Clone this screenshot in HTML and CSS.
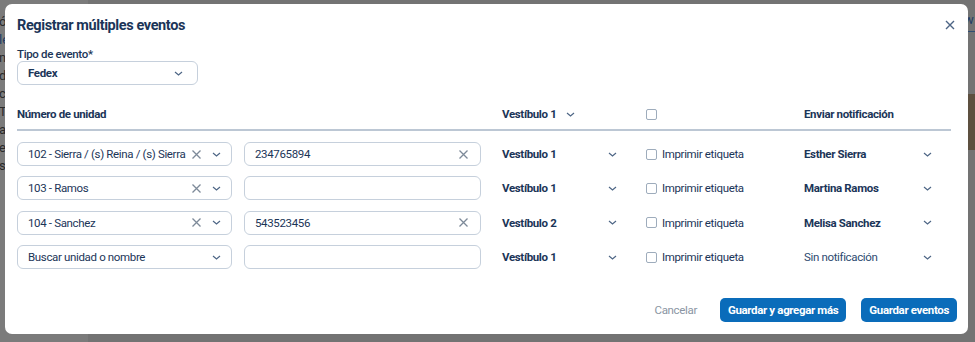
FILE: index.html
```html
<!DOCTYPE html>
<html lang="es">
<head>
<meta charset="utf-8">
<title>Registrar múltiples eventos</title>
<link rel="stylesheet" href="styles.css">
</head>
<body>
<div class="page">
  <div class="side">
    <span class="frag">ó</span>
    <span class="frag blue">le</span>
    <span class="frag">n</span>
    <span class="frag">d</span>
    <span class="frag">c</span>
    <span class="frag">T</span>
    <span class="frag">a</span>
    <span class="frag">e</span>
    <span class="frag">s/</span>
  </div>
  <div class="main">
    <div class="edge">
      <span class="edge-tab">w</span>
      <span class="edge-block"></span>
    </div>
  </div>
</div>

<div class="modal" role="dialog" aria-labelledby="mtitle">
  <div class="modal-head">
    <h1 id="mtitle" class="title">Registrar múltiples eventos</h1>
    <button class="close" aria-label="Cerrar">
      <svg width="10" height="10" viewBox="0 0 10 10"><path d="M1 1L9 9M9 1L1 9" stroke="#4d6585" stroke-width="1.4" fill="none"/></svg>
    </button>
  </div>

  <div class="field">
    <label class="label">Tipo de evento*</label>
    <div class="select select-type">
      <span class="val strong">Fedex</span>
      <svg class="chev" width="9" height="5" viewBox="0 0 9 5"><path d="M1 1L4.5 4L8 1" stroke="#4d6585" stroke-width="1.2" fill="none"/></svg>
    </div>
  </div>

  <div class="grid head">
    <div class="h-unit">Número de unidad</div>
    <div class="h-vest">Vestíbulo 1
      <svg class="chev" width="9" height="5" viewBox="0 0 9 5"><path d="M1 1L4.5 4L8 1" stroke="#4d6585" stroke-width="1.2" fill="none"/></svg>
    </div>
    <div class="h-check"><span class="cb"></span></div>
    <div class="h-notif">Enviar notificación</div>
  </div>
  <div class="rule"></div>

  <div class="rows">
    <div class="grid row">
      <div class="select unit"><span class="val">102 - Sierra / (s) Reina / (s) Sierra</span><span class="x"><svg width="9" height="9" viewBox="0 0 9 9"><path d="M0.5 0.5L8.5 8.5M8.5 0.5L0.5 8.5" stroke="#7d8a99" stroke-width="1.3" fill="none"/></svg></span><svg class="chev" width="9" height="5" viewBox="0 0 9 5"><path d="M1 1L4.5 4L8 1" stroke="#4d6585" stroke-width="1.2" fill="none"/></svg></div>
      <div class="input"><span class="val">234765894</span><span class="x"><svg width="9" height="9" viewBox="0 0 9 9"><path d="M0.5 0.5L8.5 8.5M8.5 0.5L0.5 8.5" stroke="#7d8a99" stroke-width="1.3" fill="none"/></svg></span></div>
      <div class="dd strong">Vestíbulo 1<svg class="chev" width="9" height="5" viewBox="0 0 9 5"><path d="M1 1L4.5 4L8 1" stroke="#4d6585" stroke-width="1.2" fill="none"/></svg></div>
      <label class="chk"><span class="cb"></span>Imprimir etiqueta</label>
      <div class="dd notif strong">Esther Sierra<svg class="chev" width="9" height="5" viewBox="0 0 9 5"><path d="M1 1L4.5 4L8 1" stroke="#4d6585" stroke-width="1.2" fill="none"/></svg></div>
    </div>
    <div class="grid row">
      <div class="select unit"><span class="val">103 - Ramos</span><span class="x"><svg width="9" height="9" viewBox="0 0 9 9"><path d="M0.5 0.5L8.5 8.5M8.5 0.5L0.5 8.5" stroke="#7d8a99" stroke-width="1.3" fill="none"/></svg></span><svg class="chev" width="9" height="5" viewBox="0 0 9 5"><path d="M1 1L4.5 4L8 1" stroke="#4d6585" stroke-width="1.2" fill="none"/></svg></div>
      <div class="input"></div>
      <div class="dd strong">Vestíbulo 1<svg class="chev" width="9" height="5" viewBox="0 0 9 5"><path d="M1 1L4.5 4L8 1" stroke="#4d6585" stroke-width="1.2" fill="none"/></svg></div>
      <label class="chk"><span class="cb"></span>Imprimir etiqueta</label>
      <div class="dd notif strong">Martina Ramos<svg class="chev" width="9" height="5" viewBox="0 0 9 5"><path d="M1 1L4.5 4L8 1" stroke="#4d6585" stroke-width="1.2" fill="none"/></svg></div>
    </div>
    <div class="grid row">
      <div class="select unit"><span class="val">104 - Sanchez</span><span class="x"><svg width="9" height="9" viewBox="0 0 9 9"><path d="M0.5 0.5L8.5 8.5M8.5 0.5L0.5 8.5" stroke="#7d8a99" stroke-width="1.3" fill="none"/></svg></span><svg class="chev" width="9" height="5" viewBox="0 0 9 5"><path d="M1 1L4.5 4L8 1" stroke="#4d6585" stroke-width="1.2" fill="none"/></svg></div>
      <div class="input"><span class="val">543523456</span><span class="x"><svg width="9" height="9" viewBox="0 0 9 9"><path d="M0.5 0.5L8.5 8.5M8.5 0.5L0.5 8.5" stroke="#7d8a99" stroke-width="1.3" fill="none"/></svg></span></div>
      <div class="dd strong">Vestíbulo 2<svg class="chev" width="9" height="5" viewBox="0 0 9 5"><path d="M1 1L4.5 4L8 1" stroke="#4d6585" stroke-width="1.2" fill="none"/></svg></div>
      <label class="chk"><span class="cb"></span>Imprimir etiqueta</label>
      <div class="dd notif strong">Melisa Sanchez<svg class="chev" width="9" height="5" viewBox="0 0 9 5"><path d="M1 1L4.5 4L8 1" stroke="#4d6585" stroke-width="1.2" fill="none"/></svg></div>
    </div>
    <div class="grid row">
      <div class="select unit"><span class="val">Buscar unidad o nombre</span><svg class="chev" width="9" height="5" viewBox="0 0 9 5"><path d="M1 1L4.5 4L8 1" stroke="#4d6585" stroke-width="1.2" fill="none"/></svg></div>
      <div class="input"></div>
      <div class="dd strong">Vestíbulo 1<svg class="chev" width="9" height="5" viewBox="0 0 9 5"><path d="M1 1L4.5 4L8 1" stroke="#4d6585" stroke-width="1.2" fill="none"/></svg></div>
      <label class="chk"><span class="cb"></span>Imprimir etiqueta</label>
      <div class="dd notif muted">Sin notificación<svg class="chev" width="9" height="5" viewBox="0 0 9 5"><path d="M1 1L4.5 4L8 1" stroke="#4d6585" stroke-width="1.2" fill="none"/></svg></div>
    </div>
  </div>

  <div class="foot">
    <button class="btn-link">Cancelar</button>
    <button class="btn">Guardar y agregar más</button>
    <button class="btn">Guardar eventos</button>
  </div>
</div>
</body>
</html>
```

FILE: styles.css
```css
* { box-sizing: border-box; }
html, body { margin: 0; padding: 0; }
body {
  width: 975px;
  height: 342px;
  overflow: hidden;
  background: #737373;
  font-family: Roboto, "Liberation Sans", sans-serif;
  color: #1b3558;
}

/* dimmed page underneath */
.page { display: flex; height: 342px; }
.side {
  width: 88px;
  background: #7b7b7b;
  display: flex;
  flex-direction: column;
  padding-top: 14px;
  gap: 2px;
}
.frag {
  font-size: 13px;
  line-height: 16px;
  color: #2a2a2a;
  margin-left: -1px;
}
.frag.blue { color: #1e3c64; }
.main { flex: 1; display: flex; justify-content: flex-end; }
.edge { width: 8px; display: flex; flex-direction: column; }
.edge-tab {
  margin-top: 12px;
  height: 20px;
  font-size: 13px;
  color: #1e3c64;
  border-bottom: 1px solid #2f4d72;
  overflow: hidden;
  margin-left: -3px;
}
.edge-block {
  margin-top: 62px;
  height: 56px;
  background: #5d5040;
}

/* modal */
.modal {
  position: absolute;
  left: 5px;
  top: 4px;
  width: 963px;
  height: 330px;
  background: #fff;
  border-radius: 7px;
  padding: 11px 11px 0 12px;
  display: flex;
  flex-direction: column;
  font-size: 11.5px;
  letter-spacing: -0.35px;
}
.modal-head {
  display: flex;
  justify-content: space-between;
  align-items: center;
  height: 20px;
}
.title {
  margin: 0;
  font-size: 14.5px;
  font-weight: 700;
  letter-spacing: -0.4px;
  color: #1b3558;
}
.close {
  border: 0;
  background: none;
  padding: 0;
  width: 14px;
  height: 14px;
  display: flex;
  align-items: center;
  justify-content: center;
  margin-right: 0;
}

.field { margin-top: 12px; display: flex; flex-direction: column; }
.label { font-size: 11.5px; font-weight: 500; line-height: 14px; margin-bottom: 0; }

.select, .input {
  height: 24px;
  border: 1px solid #c6d0dc;
  border-radius: 6px;
  display: flex;
  align-items: center;
  padding: 0 10px;
  font-size: 11.5px;
  color: #1b3558;
}
.select-type { width: 181px; padding-right: 14px; }
.val { flex: 1; white-space: nowrap; overflow: hidden; }
.strong { font-weight: 700; }
.chev { flex: none; }
.select .chev { margin-left: 11px; }
.x { display: flex; align-items: center; flex: none; }

.grid {
  display: grid;
  grid-template-columns: 227px 258px 144px 158px 136px;
  align-items: center;
}
.head {
  margin-top: 19px;
  height: 20px;
  font-weight: 700;
}
.h-unit { grid-column: 1 / 3; }
.h-vest { display: flex; align-items: center; gap: 10px; }
.h-check { display: flex; }
.rule {
  margin-top: 5px;
  width: 934px;
  height: 2px;
  background: #bcc7d4;
}

.rows { margin-top: 11px; display: flex; flex-direction: column; gap: 10.4px; }
.row { height: 24px; }
.unit { width: 215px; }
.input { width: 237px; }
.input .x { margin-right: 2px; }
.dd {
  display: flex;
  align-items: center;
  justify-content: space-between;
  padding-right: 29px;
}
.dd.notif { padding-right: 8px; }
.muted { font-weight: 400; color: #2d4a70; }

.cb {
  display: inline-block;
  width: 11px;
  height: 11px;
  border: 1px solid #9eacbc;
  border-radius: 2px;
  flex: none;
}
.chk {
  display: flex;
  align-items: center;
  gap: 5px;
  color: #1b3558;
}

.foot {
  margin-top: auto;
  margin-bottom: 12px;
  display: flex;
  justify-content: flex-end;
  align-items: center;
  gap: 15px;
}
.btn-link {
  border: 0;
  background: none;
  font-family: inherit;
  font-size: 11.5px;
  letter-spacing: -0.35px;
  color: #8a95a3;
  padding: 0 8px 0 0;
}
.btn {
  height: 24px;
  border: 0;
  border-radius: 5px;
  background: #0a6cba;
  color: #fff;
  font-family: inherit;
  font-size: 11.5px;
  letter-spacing: -0.35px;
  font-weight: 700;
  padding: 0 8px;
}
```
